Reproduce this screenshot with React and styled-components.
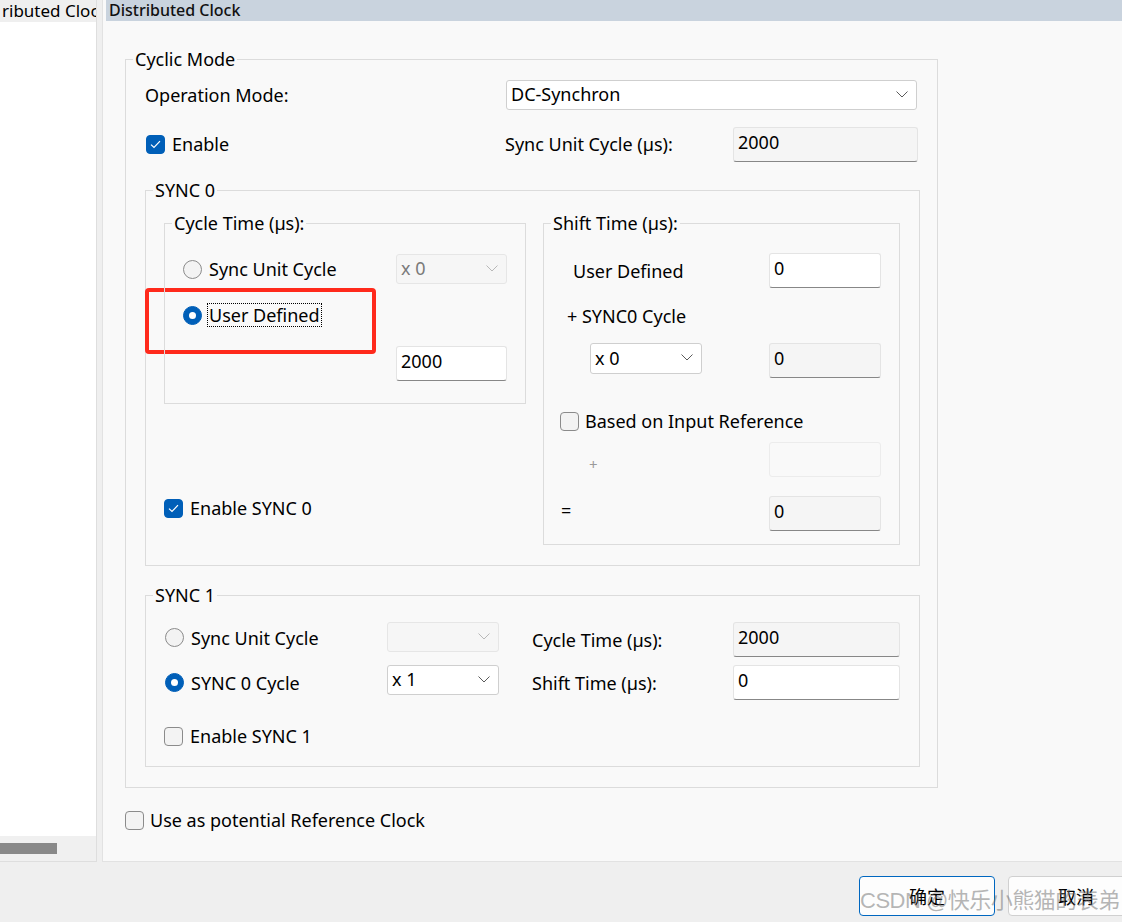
import React from 'react'
import styled, { createGlobalStyle } from 'styled-components'

const GlobalStyle = createGlobalStyle`
  html, body {
    margin: 0;
    padding: 0;
    background: #efefef;
  }
  body {
    font-family: "Noto Sans", "Noto Sans CJK SC", sans-serif;
    font-size: 18px;
    color: #000;
  }
  * { box-sizing: border-box; }
`

const Window = styled.div`
  width: 1122px;
  height: 922px;
  display: flex;
  flex-direction: column;
  background: #efefef;
  overflow: hidden;
  position: relative;
`

const Main = styled.div`
  height: 862px;
  display: flex;
  gap: 5px;
`

const TreePane = styled.div`
  width: 97px;
  display: flex;
  flex-direction: column;
  background: #fff;
  border-right: 1px solid #dedede;
  border-bottom: 1px solid #dedede;
`

const TreeTab = styled.div`
  height: 22px;
  line-height: 22px;
  background: #efefef;
  white-space: nowrap;
  overflow: hidden;
  font-size: 17px;
  text-indent: 2px;
`

const TreeBody = styled.div`
  flex: 1;
`

const HScroll = styled.div`
  height: 25px;
  background: #f0f0f0;
  padding-top: 7px;
`

const Thumb = styled.div`
  width: 57px;
  height: 11px;
  background: #898989;
`

const Editor = styled.div`
  flex: 1;
  background: #f9f9f9;
  border-left: 1px solid #e2e2e2;
  border-bottom: 1px solid #e2e2e2;
  display: flex;
  flex-direction: column;
`

const EditorTab = styled.div`
  margin-left: 3px;
  height: 21px;
  line-height: 21px;
  padding-left: 3px;
  background: #c9d3de;
  font-size: 16px;
  font-weight: 500;
  color: #111;
`

const EditorBody = styled.div`
  padding: 38px 0 0 22px;
`

const Group = styled.div`
  position: relative;
  border: 1px solid #dcdcdc;
  width: ${({ w }) => (w ? `${w}px` : 'auto')};
  margin-top: ${({ mt }) => mt || 0}px;
  padding: ${({ pad }) => pad};
`

const Caption = styled.span`
  position: absolute;
  top: -13px;
  left: 7px;
  padding: 0 2px;
  line-height: 24px;
  background: #f9f9f9;
  white-space: nowrap;
`

const TopGrid = styled.div`
  display: grid;
  grid-template-columns: 360px 228px 1fr;
  grid-template-rows: 30px 34px;
  row-gap: 17px;
  align-items: center;
`

const Label = styled.span`
  white-space: nowrap;
  padding-left: ${({ pl }) => pl || 0}px;
  padding-top: ${({ pt }) => pt || 0}px;
  padding-bottom: ${({ pb }) => pb || 0}px;
  color: ${({ dim }) => (dim ? '#9a9a9a' : '#000')};
  font-size: ${({ fs }) => (fs ? `${fs}px` : 'inherit')};
`

const SelectBox = styled.div`
  height: ${({ h }) => h || 30}px;
  width: ${({ w }) => (w ? `${w}px` : '100%')};
  align-self: start;
  display: flex;
  align-items: center;
  justify-content: space-between;
  padding: 0 8px 2px 4px;
  border: 1px solid ${({ disabled }) => (disabled ? '#e6e6e6' : '#cfcfcf')};
  border-radius: 3px;
  background: ${({ disabled }) => (disabled ? '#f6f6f6' : '#fff')};
  color: ${({ disabled }) => (disabled ? '#7a7a7a' : '#000')};
  margin-left: ${({ ml }) => ml || 0}px;
`

const Field = styled.div`
  height: 35px;
  width: ${({ w }) => (w ? `${w}px` : '100%')};
  padding: 0 0 5px 4px;
  display: flex;
  align-items: center;
  border: 1px solid ${({ disabled }) => (disabled ? '#ececec' : '#e4e4e4')};
  border-bottom-color: ${({ disabled }) => (disabled ? '#ececec' : '#878787')};
  border-radius: 3px;
  background: ${({ ro, disabled }) => (disabled ? '#f9f9f9' : ro ? '#f5f5f5' : '#fff')};
`

const Check = styled.span`
  width: 19px;
  height: 19px;
  flex: none;
  border-radius: 4px;
  display: inline-flex;
  align-items: center;
  justify-content: center;
  background: ${({ on }) => (on ? '#005fb8' : '#f3f3f3')};
  border: 1px solid ${({ on }) => (on ? '#005fb8' : '#8b8b8b')};
`

const Radio = styled.span`
  width: 19px;
  height: 19px;
  flex: none;
  border-radius: 50%;
  display: inline-flex;
  align-items: center;
  justify-content: center;
  background: ${({ on }) => (on ? '#005fb8' : '#f3f3f3')};
  border: 1px solid ${({ on }) => (on ? '#005fb8' : '#8b8b8b')};

  &::after {
    content: '';
    display: ${({ on }) => (on ? 'block' : 'none')};
    width: 7px;
    height: 7px;
    border-radius: 50%;
    background: #fff;
  }
`

const Option = styled.label`
  display: flex;
  align-items: center;
  gap: ${({ gap }) => gap || 7}px;
  white-space: nowrap;
  margin-left: ${({ ml }) => ml || 0}px;
  margin-top: ${({ mt }) => mt || 0}px;
  margin-bottom: ${({ mb }) => mb || 0}px;
`

const Focused = styled.span`
  outline: 1px dotted #000;
  outline-offset: 0;
  padding: 0 1px;
  line-height: 22px;
`

const Sync0Grid = styled.div`
  display: grid;
  grid-template-columns: 362px 1fr;
  column-gap: 17px;
  align-items: start;
`

const CycleGrid = styled.div`
  display: grid;
  grid-template-columns: 1fr 111px;
  grid-template-rows: 30px 30px 35px;
  row-gap: 16px;
  align-items: center;
`

const ShiftRow = styled.div`
  height: ${({ h }) => h}px;
  margin-top: ${({ mt }) => mt || 0}px;
  display: flex;
  align-items: center;
  justify-content: space-between;
`

const Sync1Grid = styled.div`
  display: grid;
  grid-template-columns: 223px 112px 33px 201px 1fr;
  grid-template-rows: 35px 35px;
  row-gap: 8px;
  align-items: center;
`

const Marker = styled.div`
  position: absolute;
  left: -1px;
  top: 97px;
  width: 231px;
  height: 66px;
  border: 4px solid #ff2a1c;
  border-radius: 4px;
  pointer-events: none;
`

const Footer = styled.div`
  flex: 1;
  display: flex;
  justify-content: flex-end;
  gap: 13px;
  padding-top: 14px;
  margin-right: -22px;
  position: relative;
`

const Button = styled.button`
  width: 136px;
  height: 40px;
  border-radius: 4px;
  background: #fdfdfd;
  border: 1px solid ${({ primary }) => (primary ? '#0067c0' : '#d0d0d0')};
  font-family: "Noto Sans CJK SC", sans-serif;
  font-size: 18px;
  color: #000;
  padding: 0;
`

const Watermark = styled.div`
  position: absolute;
  left: 860px;
  top: 20px;
  font-family: "Liberation Sans", "Noto Sans CJK SC", sans-serif;
  font-size: 22px;
  letter-spacing: -0.5px;
  color: rgba(110, 110, 110, 0.5);
  white-space: nowrap;
  pointer-events: none;
`

const Chevron = ({ disabled }) => (
  <svg width="12" height="7" viewBox="0 0 12 7">
    <path d="M0.5 0.5 L6 6 L11.5 0.5" fill="none" stroke={disabled ? '#b8b8b8' : '#5a5a5a'} strokeWidth="1" />
  </svg>
)

const Tick = () => (
  <svg width="11" height="9" viewBox="0 0 11 9">
    <path d="M1 4.6 L4 7.5 L10 1.2" fill="none" stroke="#fff" strokeWidth="1.2" />
  </svg>
)

const Select = ({ value, disabled, ...rest }) => (
  <SelectBox disabled={disabled} {...rest}>
    <span>{value}</span>
    <Chevron disabled={disabled} />
  </SelectBox>
)

const CheckOption = ({ on, children, ...rest }) => (
  <Option {...rest}>
    <Check on={on ? 1 : 0}>{on && <Tick />}</Check>
    {children}
  </Option>
)

const RadioOption = ({ on, children, ...rest }) => (
  <Option {...rest}>
    <Radio on={on ? 1 : 0} />
    {children}
  </Option>
)

export default function App() {
  return (
    <Window>
      <GlobalStyle />
      <Main>
        <TreePane>
          <TreeTab>ributed Clock</TreeTab>
          <TreeBody />
          <HScroll>
            <Thumb />
          </HScroll>
        </TreePane>

        <Editor>
          <EditorTab>Distributed Clock</EditorTab>
          <EditorBody>
            <Group w={813} pad="20px 17px 20px 19px">
              <Caption>Cyclic Mode</Caption>
              <TopGrid>
                <Label>Operation Mode:</Label>
                <div style={{ gridColumn: '2 / 4', paddingLeft: 1 }}>
                  <Select value="DC-Synchron" w={411} />
                </div>
                <CheckOption on ml={1}>Enable</CheckOption>
                <Label>Sync Unit Cycle (µs):</Label>
                <Field ro w={185}>2000</Field>
              </TopGrid>

              <Group mt={29} pad="32px 19px 20px 18px">
                <Caption>SYNC 0</Caption>
                <Marker />
                <Sync0Grid>
                  <div>
                    <Group pad="30px 18px 22px 18px">
                      <Caption>Cycle Time (µs):</Caption>
                      <CycleGrid>
                        <RadioOption>Sync Unit Cycle</RadioOption>
                        <Select value="x 0" disabled />
                        <RadioOption on gap={6}>
                          <Focused>User Defined</Focused>
                        </RadioOption>
                        <span />
                        <span />
                        <Field>2000</Field>
                      </CycleGrid>
                    </Group>
                    <CheckOption on mt={92}>Enable SYNC 0</CheckOption>
                  </div>

                  <Group pad="29px 18px 13px 0">
                    <Caption>Shift Time (µs):</Caption>
                    <ShiftRow h={35}>
                      <Label pl={29}>User Defined</Label>
                      <Field w={112}>0</Field>
                    </ShiftRow>
                    <ShiftRow h={24} mt={16}>
                      <Label pl={23}>+ SYNC0 Cycle</Label>
                    </ShiftRow>
                    <ShiftRow h={35} mt={15}>
                      <Select value="x 0" w={112} h={31} ml={46} />
                      <Field ro w={112}>0</Field>
                    </ShiftRow>
                    <ShiftRow h={24} mt={31}>
                      <CheckOption ml={16} gap={6}>Based on Input Reference</CheckOption>
                    </ShiftRow>
                    <ShiftRow h={35} mt={9}>
                      <Label pl={45} pt={9} dim fs={15}>+</Label>
                      <Field disabled w={112} />
                    </ShiftRow>
                    <ShiftRow h={35} mt={19}>
                      <Label pl={17} pb={8}>=</Label>
                      <Field ro w={112}>0</Field>
                    </ShiftRow>
                  </Group>
                </Sync0Grid>
              </Group>

              <Group mt={29} pad="26px 19px 16px 18px">
                <Caption>SYNC 1</Caption>
                <Sync1Grid>
                  <RadioOption ml={1} mb={4}>Sync Unit Cycle</RadioOption>
                  <Select value="" disabled />
                  <span />
                  <Label>Cycle Time (µs):</Label>
                  <Field ro>2000</Field>
                  <RadioOption on ml={1}>SYNC 0 Cycle</RadioOption>
                  <Select value="x 1" />
                  <span />
                  <Label>Shift Time (µs):</Label>
                  <Field>0</Field>
                </Sync1Grid>
                <ShiftRow h={28} mt={22}>
                  <CheckOption>Enable SYNC 1</CheckOption>
                </ShiftRow>
              </Group>
            </Group>

            <CheckOption mt={20} gap={6}>Use as potential Reference Clock</CheckOption>
          </EditorBody>
        </Editor>
      </Main>

      <Footer>
        <Button primary>确定</Button>
        <Button>取消</Button>
        <Watermark>CSDN @快乐小熊猫的表弟</Watermark>
      </Footer>
    </Window>
  )
}
